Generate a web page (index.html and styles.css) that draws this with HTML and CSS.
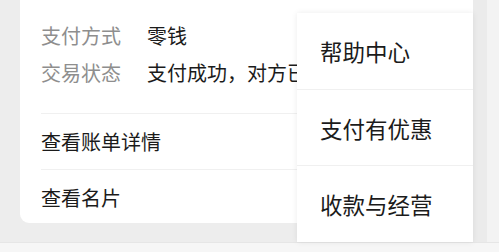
FILE: index.html
```html
<!DOCTYPE html>
<html lang="zh">
<head>
<meta charset="utf-8">
<link rel="stylesheet" href="styles.css">
</head>
<body>
<div class="screen">
  <div class="main">
    <div class="card">
      <div class="info">
        <div class="info-row"><span class="label">支付方式</span><span class="value">零钱</span></div>
        <div class="info-row"><span class="label">交易状态</span><span class="value">支付成功，对方已收款</span></div>
      </div>
      <div class="link-row first">查看账单详情</div>
      <div class="link-row">查看名片</div>
    </div>
    <div class="side"></div>
    <div class="edge"></div>
  </div>
  <div class="bottom"></div>
  <div class="menu">
    <div class="menu-item">帮助中心</div>
    <div class="menu-item">支付有优惠</div>
    <div class="menu-item">收款与经营</div>
  </div>
</div>
</body>
</html>
```

FILE: styles.css
```css
html, body {
  margin: 0;
  padding: 0;
}
body {
  width: 499px;
  height: 252px;
  overflow: hidden;
  background: #ededed;
  font-family: "Noto Sans CJK SC", "Noto Sans", sans-serif;
}
.screen {
  position: relative;
  width: 499px;
  height: 252px;
  display: flex;
  flex-direction: column;
}
.main {
  display: flex;
  height: 242px;
  padding-left: 20px;
}
.card {
  width: 453px;
  height: 223px;
  background: #fff;
  border-radius: 0 0 9px 9px;
  box-sizing: border-box;
  padding-left: 21px;
  display: flex;
  flex-direction: column;
  overflow: hidden;
}
.info {
  padding-top: 17px;
  padding-bottom: 22px;
  border-bottom: 1px solid #f0f0f0;
}
.info-row {
  display: flex;
  height: 37px;
  line-height: 37px;
  font-size: 20px;
  white-space: nowrap;
}
.label {
  color: #8e8e8e;
  width: 106px;
  flex: none;
}
.value {
  color: #1b1b1b;
}
.link-row {
  height: 55px;
  line-height: 55px;
  font-size: 20px;
  color: #1b1b1b;
  border-bottom: 1px solid #f0f0f0;
}
.link-row + .link-row {
  border-bottom: none;
}
.side {
  width: 14px;
  background: #ebebeb;
}
.edge {
  flex: 1;
  background: #f3f3f3;
}
.bottom {
  flex: 1;
  background: #f6f6f6;
  border-top: 1px solid #e6e6e6;
}
.menu {
  position: absolute;
  left: 297px;
  top: 13px;
  width: 176px;
  height: 229px;
  background: #fff;
  box-shadow: 0 0 6px rgba(0, 0, 0, 0.08);
  display: flex;
  flex-direction: column;
}
.menu-item {
  flex: 1;
  display: flex;
  align-items: center;
  padding-left: 23px;
  font-size: 22.5px;
  color: #1b1b1b;
  border-bottom: 1px solid #f0f0f0;
}
.menu-item:last-child {
  border-bottom: none;
}
```
